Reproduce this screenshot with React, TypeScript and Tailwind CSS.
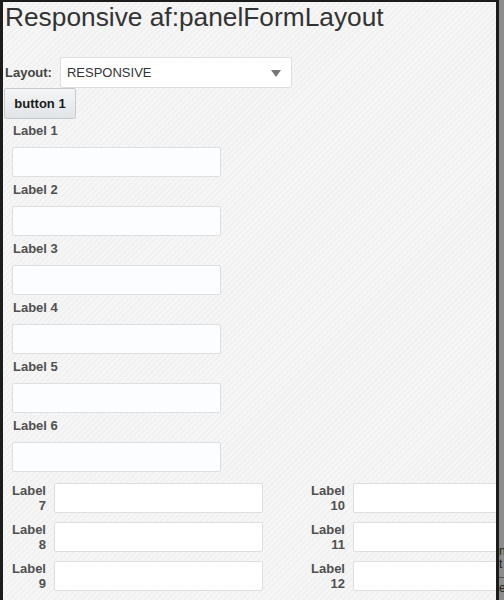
export default function App() {
  const stacked = ["Label 1", "Label 2", "Label 3", "Label 4", "Label 5", "Label 6"];
  const grid = [
    ["7", "10"],
    ["8", "11"],
    ["9", "12"],
  ];

  return (
    <div className="flex h-[600px] w-[504px] overflow-hidden bg-[#1c1c1c] font-['Liberation_Sans',Arial,sans-serif]">
      {/* window body */}
      <div className="flex h-full w-[499px] flex-col border-l-[3px] border-r-[3px] border-t-2 border-[#1c1c1c] bg-[#f5f5f5] bg-[repeating-linear-gradient(135deg,#f6f6f6_0px,#f6f6f6_2px,#f1f1f1_2px,#f1f1f1_4px)] overflow-hidden">
        <h1 className="pl-[2px] text-[26.3px] leading-[30px] text-[#333]">Responsive af:panelFormLayout</h1>

        <div className="mt-[25px] flex items-center pl-[2px]">
          <span className="text-[13px] font-bold text-[#444]">Layout:</span>
          <div className="ml-[8px] flex h-[31px] w-[232px] items-center justify-between rounded-[2px] border border-[#dcdfe2] bg-white pl-[6px] pr-[10px]">
            <span className="text-[13px] text-[#333]">RESPONSIVE</span>
            <span className="mt-[1px] h-0 w-0 border-l-[5px] border-r-[5px] border-t-[7px] border-l-transparent border-r-transparent border-t-[#777]" />
          </div>
        </div>

        <div className="pl-[1px]">
          <button className="h-[31px] w-[72px] rounded-[2px] border border-[#c6cbd0] bg-[linear-gradient(#f4f5f6,#e1e4e7)] text-[13px] font-bold text-[#1a1a1a]">
            button 1
          </button>
        </div>

        <div className="flex flex-col pl-[9px] pt-[4px]">
          {stacked.map((l) => (
            <div key={l} className="mb-[5px] flex flex-col">
              <label className="pl-[1px] text-[13px] font-bold leading-[16px] text-[#505050]">{l}</label>
              <div className="mt-[8px] h-[30px] w-[209px] rounded-[2px] border border-[#dcdfe2] bg-[#fcfdff]" />
            </div>
          ))}
        </div>

        <div className="mt-[6px] flex flex-col gap-[9px] pl-[9px]">
          {grid.map((row) => (
            <div key={row[0]} className="flex">
              {row.map((n, i) => (
                <div key={n} className={`flex shrink-0 ${i === 0 ? "w-[299px]" : "w-[260px]"}`}>
                  <div className="w-[34px] text-right text-[13px] font-bold leading-[15px] text-[#505050]">
                    Label
                    <br />
                    {n}
                  </div>
                  <div className="ml-[8px] h-[30px] w-[209px] shrink-0 rounded-[2px] border border-[#dcdfe2] bg-white" />
                </div>
              ))}
            </div>
          ))}
        </div>
      </div>

      {/* neighbouring window edge */}
      <div className="flex h-full w-[5px] flex-col overflow-hidden bg-[#8c8c8c] pt-[545px] text-[12px] leading-[13px] text-[#222]">
        <span>n</span>
        <span>t</span>
        <span className="mt-[6px] border-t border-[#555] pt-[4px]">e</span>
      </div>
    </div>
  );
}
